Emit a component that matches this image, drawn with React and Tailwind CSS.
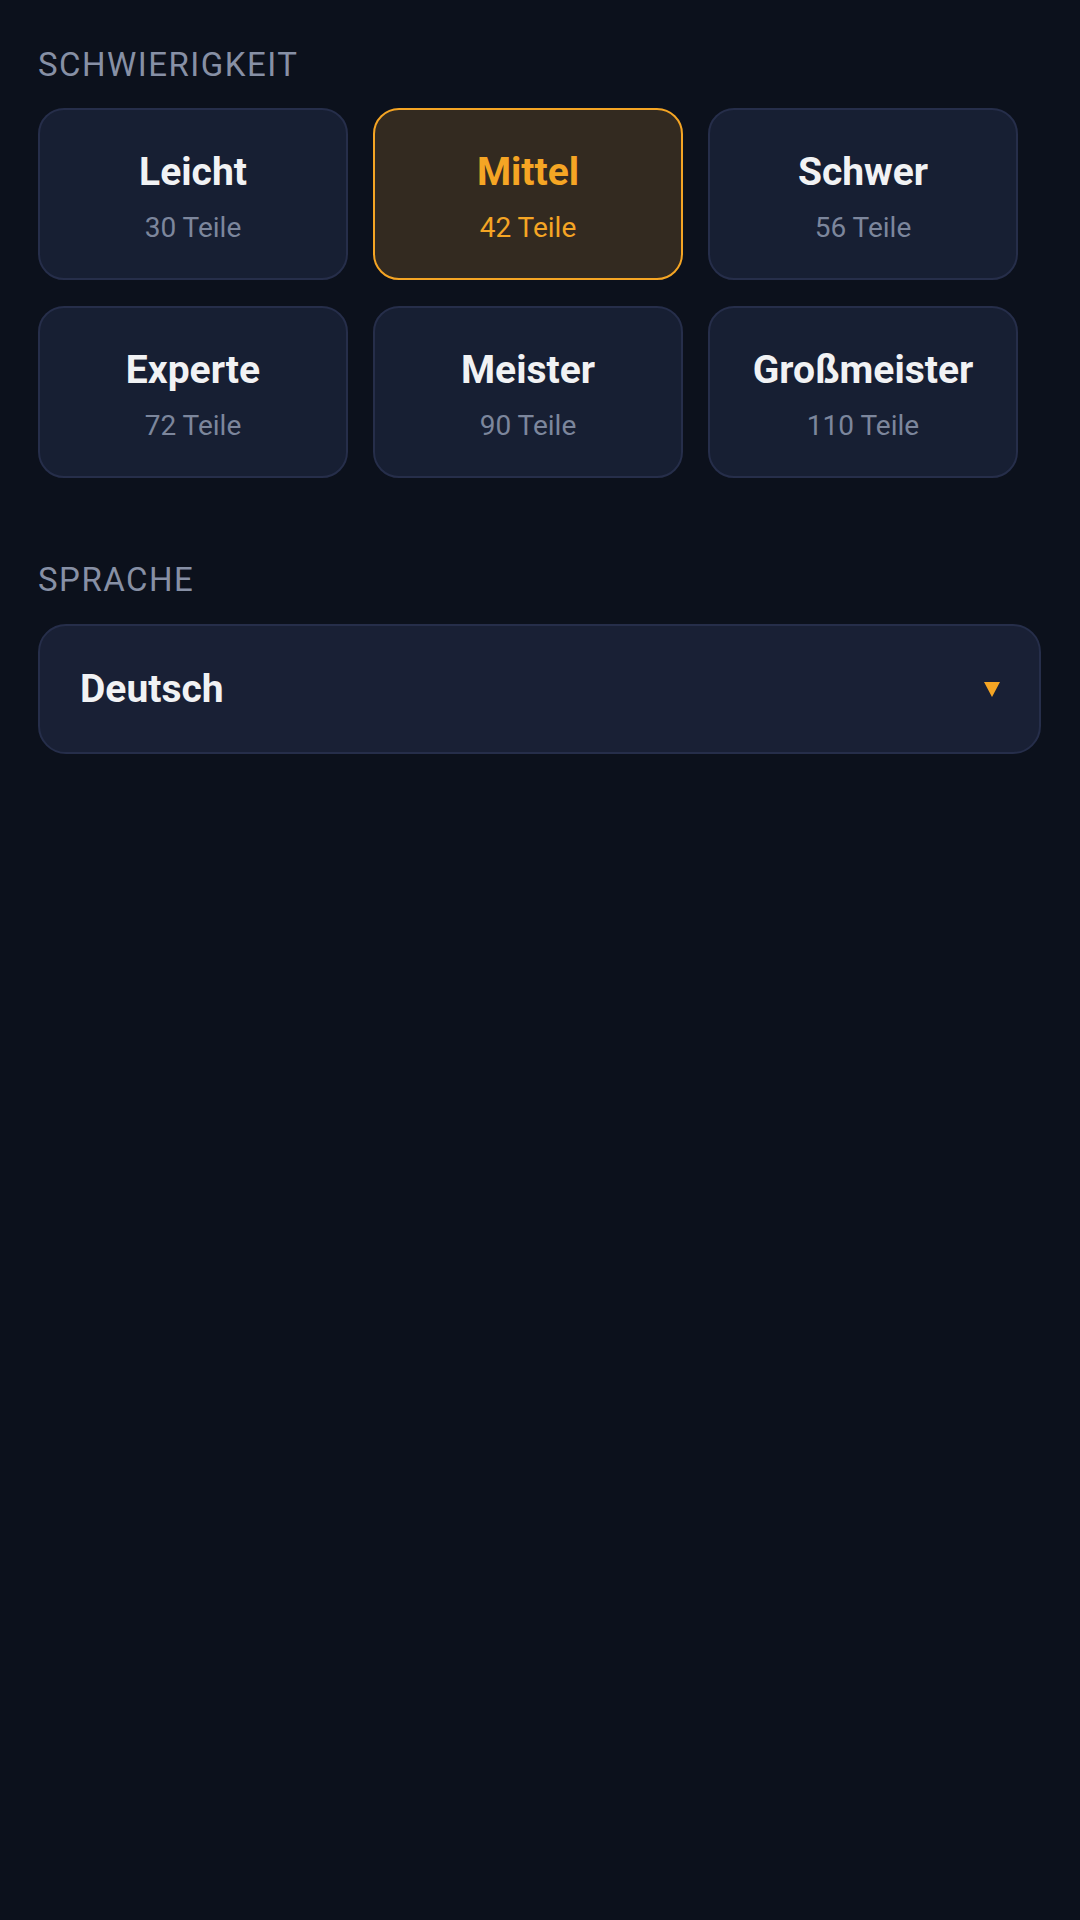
const levels = [
  { name: "Leicht", pieces: 30 },
  { name: "Mittel", pieces: 42 },
  { name: "Schwer", pieces: 56 },
  { name: "Experte", pieces: 72 },
  { name: "Meister", pieces: 90 },
  { name: "Großmeister", pieces: 110 },
];

function SectionLabel({ children }) {
  return (
    <h2 className="text-[33px] leading-[40px] tracking-[0.045em] text-[#8790a5] uppercase">
      {children}
    </h2>
  );
}

function LevelCard({ name, pieces, active }) {
  return (
    <button
      className={
        active
          ? "h-[172px] rounded-[26px] border-2 border-[#f5a524] bg-[#332a20] flex flex-col items-center pt-[39px]"
          : "h-[172px] rounded-[26px] border-2 border-[#262e4a] bg-[#171f33] flex flex-col items-center pt-[39px]"
      }
    >
      <span
        className={
          active
            ? "text-[39px] leading-[47px] font-bold text-[#f5a524]"
            : "text-[39px] leading-[47px] font-bold text-[#f1f2f4]"
        }
      >
        {name}
      </span>
      <span
        className={
          active
            ? "mt-[15px] text-[28px] leading-[34px] text-[#f5a524]"
            : "mt-[15px] text-[28px] leading-[34px] text-[#7c869c]"
        }
      >
        {pieces} Teile
      </span>
    </button>
  );
}

export default function App() {
  return (
    <div
      className="min-h-[1920px] w-[1080px] bg-[#0c111c] pl-[38px] pr-[39px] pt-[45px]"
      style={{ fontFamily: "Roboto, 'Noto Sans', sans-serif" }}
    >
      {/* SCHWIERIGKEIT */}
      <SectionLabel>Schwierigkeit</SectionLabel>
      <div className="mt-[23px] grid grid-cols-[repeat(3,310px)] gap-x-[25px] gap-y-[26px]">
        {levels.map((l) => (
          <LevelCard key={l.name} name={l.name} pieces={l.pieces} active={l.name === "Mittel"} />
        ))}
      </div>

      {/* SPRACHE */}
      <div className="mt-[82px]">
        <SectionLabel>Sprache</SectionLabel>
      </div>
      <button className="mt-[24px] w-full h-[130px] rounded-[28px] border-2 border-[#262e4a] bg-[#192035] flex items-center justify-between pl-[40px] pr-[39px]">
        <span className="text-[39px] leading-[47px] font-bold text-[#f1f2f4]">Deutsch</span>
        <svg width="16" height="15" viewBox="0 0 16 15">
          <polygon points="0,0 16,0 8,15" fill="#f5a524" />
        </svg>
      </button>
    </div>
  );
}
